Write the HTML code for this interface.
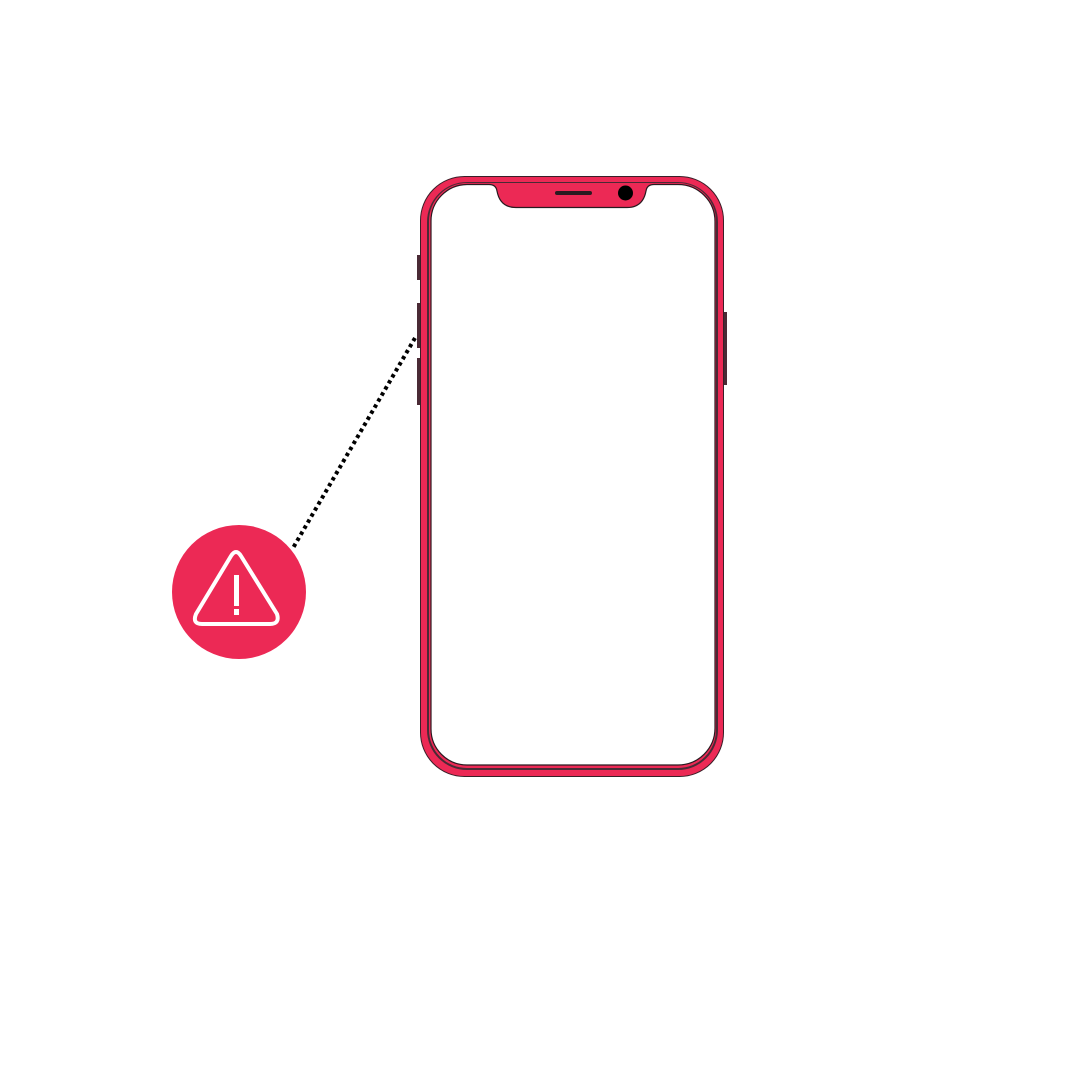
<!DOCTYPE html>
<html><head><meta charset="utf-8"><style>html,body{margin:0;padding:0;background:#fff;width:1080px;height:1080px;overflow:hidden}</style></head>
<body>
<svg width="1080" height="1080" viewBox="0 0 1080 1080" xmlns="http://www.w3.org/2000/svg">
<rect width="1080" height="1080" fill="#fff"/>
<!-- side buttons -->
<rect x="417" y="255" width="4" height="25" fill="#4a2a35"/>
<rect x="417" y="303" width="4" height="45" fill="#4a2a35"/>
<rect x="417" y="358" width="4" height="47" fill="#4a2a35"/>
<rect x="723" y="312" width="4" height="73" fill="#4a2a35"/>
<!-- body -->
<rect x="420.5" y="176.5" width="303" height="600" rx="44" fill="#ec2955" stroke="#3a1f28" stroke-width="1"/>
<rect x="427" y="182" width="291" height="588" rx="40" fill="#4a2a35"/>
<rect x="429" y="183" width="287" height="585" rx="38" fill="#ec2955"/>
<path d="M467 184.5 H489 Q496 184.5 497 191 Q500 207.5 516 207.5 H627 Q643 207.5 646 191 Q647 184.5 654 184.5 H678 A37 37 0 0 1 715 221.5 V728 A37 37 0 0 1 678 765 H467 A36 36 0 0 1 431 729 V221 A36.5 36.5 0 0 1 467 184.5 Z" fill="#fff" stroke="#2a1a20" stroke-width="1.2"/>
<rect x="555" y="191" width="37" height="4" rx="2" fill="#2a1a20"/>
<circle cx="625.5" cy="193" r="7.5" fill="#000"/>
<!-- dotted line -->
<line x1="415" y1="338" x2="293" y2="548" stroke="#000" stroke-width="4" stroke-dasharray="3.5 3.5"/>
<!-- alert circle -->
<circle cx="239" cy="592" r="67" fill="#ec2955"/>
<path d="M231 556 Q236 548 241 556 L277 614 Q280 624 270 624 H202 Q192 624 196 614 Z" fill="none" stroke="#fff" stroke-width="4" stroke-linejoin="round"/>
<rect x="234" y="575" width="5" height="31" fill="#fff"/>
<rect x="234" y="609" width="5" height="6" fill="#fff"/>
</svg>
</body></html>
